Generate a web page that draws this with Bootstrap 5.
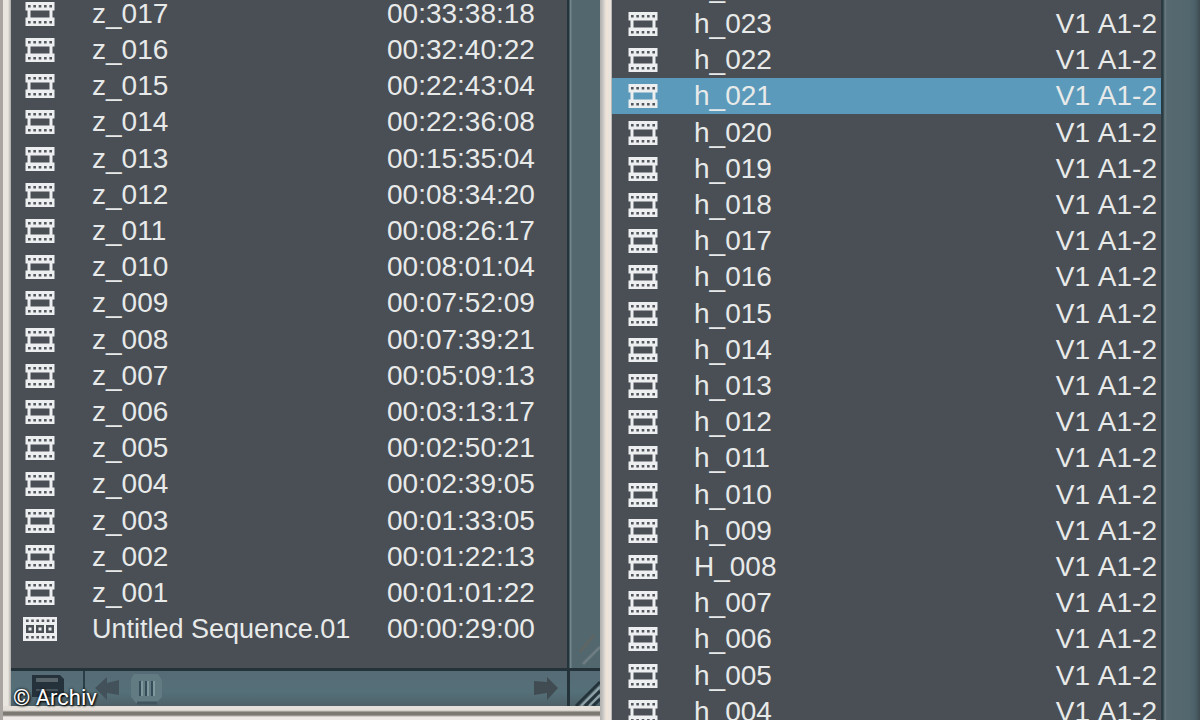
<!DOCTYPE html>
<html lang="en">
<head>
<meta charset="utf-8">
<meta name="viewport" content="width=device-width, initial-scale=1">
<title>Bins</title>
<link rel="stylesheet" href="https://cdn.jsdelivr.net/npm/bootstrap@5.3.0/dist/css/bootstrap.min.css">
<style>
  body { background: #4a4f55; color: #e8eaea; font-family: "Liberation Sans", Arial, sans-serif; font-size: 28px; line-height: 32px; }
  .bin-left { flex: 0 0 50%; padding-left: 3px; background: #aaa5a0; }
  .bin-inner { padding-left: 8px; background: linear-gradient(90deg, #e9e5df 5px, #aaa9a5 8px); }
  .bin-list { background: #4a4f55; }
  .bin-right { background: #4a4f55; }
  .divider { flex: 0 0 12px; background: linear-gradient(90deg, #b5b4b2 1px, #d3d0cc 4px, #eee3d8 6px, #e9e4de 11px, #8d8c8b 12px); }
  .clip-table { width: 100%; table-layout: fixed; border-collapse: collapse; white-space: nowrap; }
  .clip-table tr { height: 36px; }
  .clip-table tr:nth-child(5n) { height: 37px; }
  .clip-table td { padding: 0; line-height: 32px; vertical-align: middle; }
  .clip-table svg { display: block; fill: #eceeef; }
  .rows-z { margin-top: -4px; }
  .rows-h { margin-top: -30px; }
  .rows-z td:first-child { width: 81px; padding-left: 12px; }
  .rows-z td:last-child { width: 180px; }
  .rows-h td:first-child { width: 82px; padding-left: 14px; }
  .rows-h td:last-child { padding-right: 4px; text-align: right; font-kerning: none; }
  .seq-name { font-size: 27px; }
  .picked { background: #5b9abb; }
  .vbar { flex: 0 0 33px; background: linear-gradient(90deg, #24343b 2px, #71868c 3px, #71868c 4px, #53676f 5px); }
  .vbar-right { flex: 0 0 39px; background: linear-gradient(90deg, #2b3b42 2px, #687c82 4px, #566970 6px, #53676f 28px, #4b6068 34px, #3f4b51 39px); }
  .hbar { height: 38px; border-top: 3px solid #24323a; background: linear-gradient(#566b75, #557079 60%, #4d6067); }
  .hbar button { border: 0; padding: 0; background: none; line-height: 0; }
  .hbar .menu-cell { width: 74px; border-right: 2px solid #293d46; }
  .corner { width: 33px; border-left: 3px solid #24323a; line-height: 0; }
  .bin-foot { height: 14px; background: linear-gradient(#e4dfd8 4px, #c8c3bd 5px, #7c7973 6px, #7c7973 9px, #eee9e6 11px); }
  .credit { left: 13px; bottom: 8px; font-family: Roboto, sans-serif; font-size: 22px; line-height: 28px; color: #fff; text-shadow: 0 0 3px #000, 1px 1px 2px #000; }
</style>
</head>
<body class="vh-100 overflow-hidden">
<svg width="0" height="0" class="position-absolute" aria-hidden="true">
  <symbol id="clip" viewBox="0 0 34 26">
    <path fill-rule="evenodd" d="M2.500 1H31.500V9.500H29.500V16.500H31.500V25H2.500V16.500H4.500V9.500H2.500ZM7.500 9.500V16.500H26.500V9.500Z"/>
    <path d="M5 5.200H29M5 21.200H29" stroke="#50565c" stroke-width="2.600" stroke-dasharray="2.600 2.750"/>
  </symbol>
  <symbol id="sequence" viewBox="0 0 34 26">
    <path fill-rule="evenodd" d="M0 1H34V25H0ZM3 9v8h8V9zM13 9v8h8V9zM23 9v8h8V9z"/>
    <path d="M3 4.800H32M3 21.200H32" stroke="#50565c" stroke-width="2.400" stroke-dasharray="2.600 2.600"/>
    <path d="M5.500 11.500h3v3h-3zM15.500 11.500h3v3h-3zM25.500 11.500h3v3h-3z"/>
  </symbol>
</svg>
<main class="d-flex h-100">
  <section class="bin-left h-100 position-relative d-flex flex-column" aria-label="Bin z">
    <div class="bin-inner d-flex flex-column flex-grow-1 overflow-hidden">
      <div class="bin-list d-flex flex-grow-1 overflow-hidden">
        <div class="flex-grow-1 overflow-hidden"><table class="clip-table rows-z"><tbody id="zRows"></tbody></table></div>
        <div class="vbar d-flex align-items-end justify-content-end"><svg width="28" height="44" viewBox="0 0 28 44" fill="none" stroke-width="3"><path d="M8 28 22 11" stroke="#5e6664"/><path d="M11 40 28 23" stroke="#6c7c80"/></svg></div>
      </div>
      <div class="hbar d-flex flex-shrink-0">
        <button class="menu-cell" type="button" aria-label="Bin menu"><svg width="34" height="34" viewBox="0 0 34 34"><path d="M2 3H30L34 7V25H2Z" fill="#26323b"/><path d="M6 6H28V10H6Z" fill="#59636a"/><path d="M6 17H28V19H6Z" fill="#46535a"/></svg></button>
        <button class="ms-2" type="button" aria-label="Scroll left"><svg width="28" height="34" viewBox="0 0 28 34"><path d="M2 16 14 5V11L26 8V23L14 21V28Z" fill="#43515a"/></svg></button>
        <button class="ms-2" type="button" aria-label="Scroll thumb"><svg width="34" height="34" viewBox="0 0 34 34"><path d="M5 2H29L33 8V25L27 31H7L2 25V7Z" fill="#627a82"/><path d="M8 31H28" stroke="#40545d" stroke-width="3"/><path d="M11 9v15M17 9v15M23 9v15" stroke="#344d59" stroke-width="2"/><path d="M13 9v15M19 9v15M25 9v15" stroke="#7f989e" stroke-width="2"/></svg></button>
        <button class="ms-auto me-2" type="button" aria-label="Scroll right"><svg width="28" height="34" viewBox="0 0 28 34"><path d="M27 16 16 5V10L3 9V23L16 21V28Z" fill="#404b52"/></svg></button>
        <div class="corner"><svg width="30" height="35" viewBox="0 0 30 35" fill="none"><path d="M6 35 30 11M15 35 30 20M23 35 30 28" stroke="#24323a" stroke-width="3"/><path d="M11 35 30 16M19 35 30 24" stroke="#91a2a6" stroke-width="2"/></svg></div>
      </div>
    </div>
    <div class="bin-foot flex-shrink-0"></div>
    <div class="credit position-absolute">© Archiv</div>
  </section>
  <div class="divider"></div>
  <section class="bin-right h-100 d-flex flex-grow-1 overflow-hidden" aria-label="Bin h">
    <div class="flex-grow-1 overflow-hidden"><table class="clip-table rows-h"><tbody id="hRows"></tbody></table></div>
    <div class="vbar-right"></div>
  </section>
</main>
<script src="https://cdn.jsdelivr.net/npm/bootstrap@5.3.0/dist/js/bootstrap.bundle.min.js"></script>
<script>
  const icon = id => `<svg width="34" height="26" aria-hidden="true"><use href="#${id}"/></svg>`;
  const pad = n => String(n).padStart(3, "0");
  const times = ["33:38:18", "32:40:22", "22:43:04", "22:36:08", "15:35:04", "08:34:20", "08:26:17", "08:01:04", "07:52:09", "07:39:21", "05:09:13", "03:13:17", "02:50:21", "02:39:05", "01:33:05", "01:22:13", "01:01:22"];
  document.getElementById("zRows").innerHTML = times.map((t, i) =>
    `<tr><td>${icon("clip")}</td><td>z_${pad(17 - i)}</td><td>00:${t}</td></tr>`).join("") +
    `<tr><td>${icon("sequence")}</td><td class="seq-name">Untitled Sequence.01</td><td>00:00:29:00</td></tr>`;
  let rows = "";
  for (let n = 24; n >= 4; n--) {
    rows += `<tr${n === 21 ? ' class="picked"' : ""}><td>${icon("clip")}</td><td>${n === 8 ? "H" : "h"}_${pad(n)}</td><td>V1 A1-2</td></tr>`;
  }
  document.getElementById("hRows").innerHTML = rows;
</script>
</body>
</html>
